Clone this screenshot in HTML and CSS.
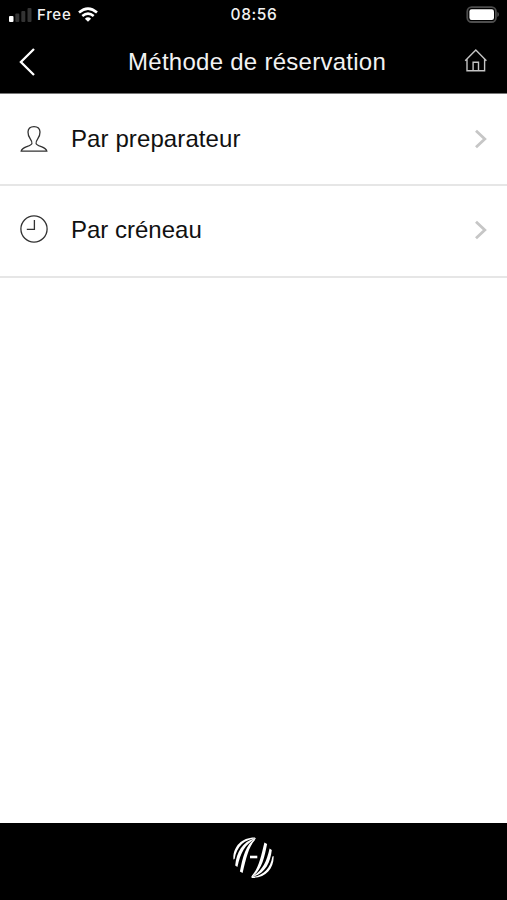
FILE: index.html
```html
<!DOCTYPE html>
<html lang="fr">
<head>
<meta charset="utf-8">
<title>Méthode de réservation</title>
<link rel="stylesheet" href="styles.css">
</head>
<body>
<div class="app">
  <header class="top">
    <div class="status">
      <div class="carrier">
        <svg width="23" height="14" viewBox="0 0 23 14"><rect y="8" width="4.5" height="6" rx="1" fill="#fff"/><g fill="#333"><rect x="6.3" y="5.5" width="4" height="8.5" rx="1"/><rect x="12.3" y="3" width="4" height="11" rx="1"/><rect x="18.5" width="4" height="14" rx="1"/></g></svg>
        <span class="network">Free</span>
        <svg width="20" height="15" viewBox="0 0 20 15" fill="none" stroke="#fff" stroke-width="2.6"><path d="M1 5.6Q10-2.2 19 5.6M4.3 9Q10 4.2 15.7 9"/><path d="M6.9 11.7Q10 9 13.1 11.7L10 14.8Z" fill="#fff" stroke="none"/></svg>
      </div>
      <time class="clock">08:56</time>
      <svg class="battery" width="34" height="18" viewBox="0 0 34 18"><rect x="2.3" y="1.2" width="28.6" height="14.8" rx="4.3" fill="none" stroke="#4d4d4d" stroke-width="1.8"/><rect x="4.4" y="3.3" width="24.6" height="10.6" rx="2.2" fill="#fff"/><path d="M32.3 6.1Q34 6.5 34 8.5T32.3 10.9Z" fill="#4d4d4d"/></svg>
    </div>
    <nav class="bar">
      <svg width="18" height="30" viewBox="0 0 18 30" fill="none" stroke="#fff" stroke-width="2.3"><path d="M16 2L2.9 15 16 28"/></svg>
      <h1 class="title">Méthode de réservation</h1>
      <svg class="home" width="24" height="24" viewBox="0 0 24 24" fill="none" stroke="#c4c4c4" stroke-width="1.4"><path d="M1.2 11.7L11.8 1 22.4 11.7M3 10V21.8H20.6V10M9.1 21.8V13.2H14.5V21.8"/></svg>
    </nav>
  </header>
  <main class="list">
    <a class="row">
      <svg width="28" height="28" viewBox="0 0 28 28" fill="none" stroke="#333" stroke-width="1.3"><path d="M11.9 18.6C12.3 17 11.7 15.9 10.4 14.1C8.6 11.7 7.9 9.9 8 7C8.1 3.4 10.3 1.6 14 1.6S19.9 3.4 20 7C20.1 9.9 19.4 11.7 17.6 14.1C16.3 15.9 15.7 17 16.1 18.6C16.5 20 18.5 20.6 21.3 21.6C24.5 22.8 26.4 24 26.8 26.2H1.2C1.6 24 3.5 22.8 6.7 21.6C9.5 20.6 11.5 20 11.9 18.6Z"/></svg>
      <span class="label label-first">Par preparateur</span>
      <svg class="chevron" width="14" height="20" viewBox="0 0 14 20"><path d="M2 1.7L10.8 10 2 18.3"/></svg>
    </a>
    <a class="row">
      <svg class="dial" width="28" height="28" viewBox="0 0 28 28" fill="none" stroke="#333" stroke-width="1.3"><circle cx="14" cy="14" r="13.1"/><path d="M14.4 5V14.4H6.8"/></svg>
      <span class="label">Par créneau</span>
      <svg class="chevron" width="14" height="20" viewBox="0 0 14 20"><path d="M2 1.7L10.8 10 2 18.3"/></svg>
    </a>
  </main>
  <footer class="foot">
    <svg width="42" height="42" viewBox="0 0 42 42"><g id="half" fill="#fff"><path d="M.4 22.5C-.3 10 8.5.3 22 .5L22.5 1.5C12 2.1 3.7 9 1.6 22Z"/><path d="M2.2 28.5C3.7 15 9 5 22.5 1L22.5 1.8C12 7 7.6 16 4.4 30Z"/><path d="M6.9 34.5C9.7 20 12.7 7.5 22.5 1.2L22 3C15.5 10 12.9 22 9.6 36Z"/></g><use href="#half" transform="rotate(180 20.5 20.7)"/><path d="M17 20h7.3" stroke="#fff" stroke-width="2.6"/></svg>
  </footer>
</div>
</body>
</html>
```
FILE: styles.css
```css
* { box-sizing: border-box; }
body { margin: 0; background: #fff; font-family: "Liberation Sans", Arial, sans-serif; }
svg { display: block; flex: none; }
.app { display: flex; flex-direction: column; height: 900px; }
.top { height: 94px; background: #000; color: #f2f2f2; border-bottom: 1px solid #777; }
.status { display: grid; grid-template-columns: 1fr auto 1fr; align-items: center; height: 29px; padding: 0 8px 0 9px; }
.carrier { display: flex; align-items: center; gap: 5px; }
.network { margin-right: 1.5px; font: 500 15px Inter, sans-serif; letter-spacing: 0.7px; }
.clock { font: 500 15.5px Inter, sans-serif; letter-spacing: 0.6px; }
.battery { justify-self: end; }
.bar { display: flex; align-items: center; height: 64px; padding: 2px 19px 0 18px; }
.title { margin: 0 0 0 92px; font-size: 24px; font-weight: 400; line-height: 30px; letter-spacing: 0.27px; white-space: nowrap; }
.home { margin: -2px 0 0 auto; }
.list { flex: 1; }
.row { display: flex; align-items: center; height: 92px; padding: 0 19px 0 20px; border-bottom: 2px solid #e6e6e6; }
.row + .row { padding-bottom: 2px; }
.dial { margin-top: -2px; }
.label { margin-left: 23px; font-size: 24px; line-height: 30px; color: #111; }
.label-first { letter-spacing: 0.1px; }
.chevron { margin: -1px 0 0 auto; fill: none; stroke: #c6c6c6; stroke-width: 2.8; }
.foot { display: flex; justify-content: center; height: 77px; padding-top: 14px; background: #000; }
```
